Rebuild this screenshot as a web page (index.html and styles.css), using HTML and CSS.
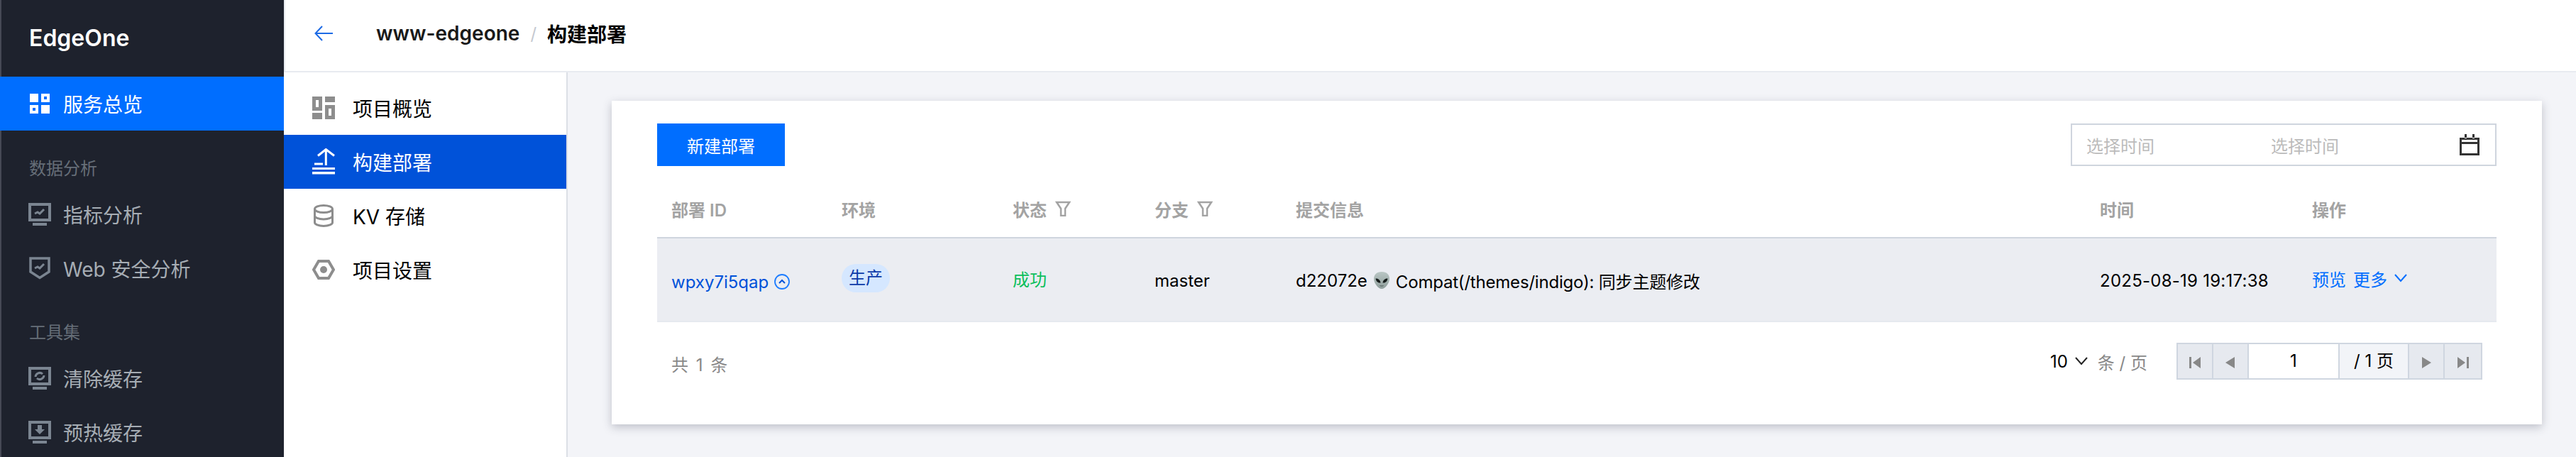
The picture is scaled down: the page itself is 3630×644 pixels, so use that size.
FILE: index.html
```html
<!DOCTYPE html>
<html lang="zh-CN">
<head>
    <meta charset="UTF-8">
    <meta name="viewport" content="width=device-width, initial-scale=1.0">
    <title>构建部署 - EdgeOne</title>
    <link rel="stylesheet" href="styles.css">
</head>
<body>
    <div class="app">
        <aside class="sidebar">
            <div class="brand">EdgeOne</div>
            <a class="side-item side-item-active">
                <svg class="side-icon-grid" viewBox="0 0 28 28"><path fill="#fff" fill-rule="evenodd" d="M0 0h12v12H0zM16 0h12v12H16zM20 4v4h4V4zM0 16h12v12H0zM4 20v4h4v-4zM16 16h12v12H16z"/></svg>
                <span>服务总览</span>
            </a>
            <div class="side-label side-label-first">数据分析</div>
            <a class="side-item">
                <svg class="side-icon" viewBox="0 0 32 32"><path fill="#7b8591" fill-rule="evenodd" d="M0 0h32v26H0zM4 4v18h24V4zM6 28h20v4H6z"/><path fill="none" stroke="#7b8591" stroke-width="3" d="M9 15l4-2 3 2 6-6"/></svg>
                <span>指标分析</span>
            </a>
            <a class="side-item">
                <svg class="side-icon" viewBox="0 0 32 32"><path fill="none" stroke="#7b8591" stroke-width="3.5" d="M3 2h26v19l-13 8.500L3 21z"/><path fill="none" stroke="#7b8591" stroke-width="3" d="M9 16l4-2 3 2 6-6"/></svg>
                <span>Web 安全分析</span>
            </a>
            <div class="side-label">工具集</div>
            <a class="side-item">
                <svg class="side-icon" viewBox="0 0 32 32"><path fill="#7b8591" fill-rule="evenodd" d="M0 0h32v26H0zM4 4v18h24V4zM6 28h20v4H6z"/><path fill="none" stroke="#7b8591" stroke-width="3" d="M10 14a6 6 0 0 1 10-4M22 12a6 6 0 0 1-10 4"/></svg>
                <span>清除缓存</span>
            </a>
            <a class="side-item">
                <svg class="side-icon" viewBox="0 0 32 32"><path fill="#7b8591" fill-rule="evenodd" d="M0 0h32v26H0zM4 4v18h24V4zM6 28h20v4H6z"/><path fill="#7b8591" d="M13 6h6v6h4l-7 7-7-7h4z"/></svg>
                <span>预热缓存</span>
            </a>
        </aside>

        <div class="main">
            <header class="topbar">
                <svg class="back" viewBox="0 0 26 22"><path fill="none" stroke="#1d6be5" stroke-width="2" d="M26 11H2M11 1L1.500 11 11 21"/></svg>
                <span class="crumb">www-edgeone</span>
                <span class="crumb-sep">/</span>
                <span class="crumb crumb-title">构建部署</span>
            </header>

            <div class="body">
                <nav class="subnav">
                    <a class="sub-item">
                        <svg class="sub-icon" viewBox="0 0 32 32"><path fill="#8d8d8d" fill-rule="evenodd" d="M0 0h14v20H0zM5 5v10h4V5zM18 0h14v8H18zM0 23h14v9H0zM18 12h14v20H18zM23 17v10h4V17z"/></svg>
                        <span>项目概览</span>
                    </a>
                    <a class="sub-item sub-item-active">
                        <svg class="sub-icon-up" viewBox="0 0 32 38"><path fill="none" stroke="#fff" stroke-width="3" d="M8 10.500L19.300 1.500 31 10.500M19.300 2v22"/><path fill="#fff" d="M3 20.500h12v3H3zM0 27h32v3H0zM0 33h32v3.500H0z"/></svg>
                        <span>构建部署</span>
                    </a>
                    <a class="sub-item">
                        <svg class="sub-icon" viewBox="0 0 32 32"><g fill="none" stroke="#8d8d8d" stroke-width="3"><path d="M3.500 6.500v19c0 2.500 5 5 12.500 5s12.500-2.500 12.500-5v-19"/><ellipse cx="16" cy="6.500" rx="12.500" ry="5"/><path d="M3.500 16c0 2.500 5 5 12.500 5s12.500-2.500 12.500-5"/></g></svg>
                        <span>KV 存储</span>
                    </a>
                    <a class="sub-item">
                        <svg class="sub-icon" viewBox="0 0 32 32"><path fill="none" stroke="#8d8d8d" stroke-width="4" d="M9 4h14l7 12-7 12H9L2 16z"/><circle cx="16" cy="16" r="5" fill="#8d8d8d"/></svg>
                        <span>项目设置</span>
                    </a>
                </nav>

                <section class="content">
                    <div class="card">
                        <div class="toolbar">
                            <button type="button" class="btn-primary">新建部署</button>
                            <div class="date-range">
                                <span class="date-text">选择时间</span>
                                <span class="date-text">选择时间</span>
                                <svg class="calendar" viewBox="0 0 28 30"><path fill="#333" fill-rule="evenodd" d="M0 5h28v25H0zM3 8v3h22V8zM3 14v13h22V14zM7 0h3v6H7zM18 0h3v6h-3z"/></svg>
                            </div>
                        </div>

                        <div class="row row-head">
                            <div class="cell">部署 ID</div>
                            <div class="cell">环境</div>
                            <div class="cell">状态 <svg class="filter" viewBox="0 0 22 22"><path fill="none" stroke="#a3a3a3" stroke-width="2.500" d="M2 2h18l-6 9v10H8V11z"/></svg></div>
                            <div class="cell">分支 <svg class="filter" viewBox="0 0 22 22"><path fill="none" stroke="#a3a3a3" stroke-width="2.500" d="M2 2h18l-6 9v10H8V11z"/></svg></div>
                            <div class="cell">提交信息</div>
                            <div class="cell">时间</div>
                            <div class="cell">操作</div>
                        </div>
                        <div class="row row-body">
                            <div class="cell cell-id">
                                <a class="link">wpxy7i5qap</a>
                                <svg class="id-icon" viewBox="0 0 22 22"><circle cx="11" cy="11" r="10" fill="none" stroke="#1d7dff" stroke-width="1.800"/><path fill="none" stroke="#0052d9" stroke-width="2" d="M7 13l4-4 4 4"/></svg>
                            </div>
                            <div class="cell"><span class="tag">生产</span></div>
                            <div class="cell status-ok">成功</div>
                            <div class="cell cell-low">master</div>
                            <div class="cell cell-low commit">
                                <span>d22072e</span>
                                <svg class="alien" viewBox="0 0 24 24"><defs><linearGradient id="alien-skin" x1="0" y1="0" x2="0" y2="1"><stop offset="0" stop-color="#b9c6c4"/><stop offset="1" stop-color="#8f9e9c"/></linearGradient></defs><path fill="url(#alien-skin)" d="M12 0C5 0 1 4 1 10c0 6 6 14 11 14s11-8 11-14C23 4 19 0 12 0z"/><path fill="#151b1a" d="M3.500 9.500c3.500-.5 6.500 2 7 6-3.500.5-6.500-2-7-6zM20.500 9.500c-3.500-.5-6.500 2-7 6 3.500.5 6.500-2 7-6z"/><path fill="none" stroke="#4c5755" d="M9.500 19.500c1.500.7 3.500.7 5 0"/></svg>
                                <span class="commit-msg">Compat(/themes/indigo): 同步主题修改</span>
                            </div>
                            <div class="cell cell-low cell-time">2025-08-19 19:17:38</div>
                            <div class="cell cell-ops">
                                <a class="action">预览</a>
                                <a class="action">更多</a>
                                <svg class="caret" viewBox="0 0 18 12"><path fill="none" stroke="#006eff" stroke-width="2" d="M1 1l8 9 8-9"/></svg>
                            </div>
                        </div>

                        <div class="footer">
                            <div class="total">共 1 条</div>
                            <div class="pager">
                                <div class="page-size">
                                    <span>10</span>
                                    <svg class="caret-dark" viewBox="0 0 18 12"><path fill="none" stroke="#222" stroke-width="2" d="M1 1l8 9 8-9"/></svg>
                                    <span class="page-unit">条 / 页</span>
                                </div>
                                <div class="pages">
                                    <div class="page-btn"><svg class="page-icon" viewBox="0 0 16 16"><path fill="#888" d="M0 0h3v16H0zM16 0v16L5 8z"/></svg></div>
                                    <div class="page-btn"><svg class="page-icon" viewBox="0 0 16 16"><path fill="#888" d="M14 0v16L1 8z"/></svg></div>
                                    <div class="page-input">1</div>
                                    <div class="page-count">/ 1 页</div>
                                    <div class="page-btn"><svg class="page-icon" viewBox="0 0 16 16"><path fill="#888" d="M2 0v16l13-8z"/></svg></div>
                                    <div class="page-btn page-btn-last"><svg class="page-icon" viewBox="0 0 16 16"><path fill="#888" d="M0 0v16l11-8zM13 0h3v16h-3z"/></svg></div>
                                </div>
                            </div>
                        </div>
                    </div>
                </section>
            </div>
        </div>
    </div>
</body>
</html>
```

FILE: styles.css
```css
html, body {
    margin: 0;
    height: 100%;
    overflow: hidden;
    font-family: Inter, "Noto Sans CJK SC", sans-serif;
    font-size: 24px;
    color: #000;
}

svg {
    display: block;
    flex: none;
}

.app {
    display: flex;
    width: 3630px;
    height: 644px;
}

/* left dark menu */
.sidebar {
    width: 400px;
    flex: none;
    background-color: #1e222d;
    box-shadow: inset 2px 0 0 #464955;
}

.brand {
    height: 108px;
    padding: 36px 0 0 41px;
    box-sizing: border-box;
    font-size: 32px;
    line-height: 36px;
    font-weight: 600;
    color: #fff;
}

.side-item {
    display: flex;
    align-items: center;
    height: 76px;
    padding-left: 40px;
    color: #a6adb4;
    font-size: 28px;
}

.side-item span {
    margin-left: 17px;
}

.side-item-active {
    background-color: #006eff;
    color: #fff;
    padding-left: 42px;
}

.side-icon {
    width: 32px;
    height: 32px;
}

.side-icon-grid {
    width: 28px;
    height: 28px;
}

.side-item-active span {
    margin-left: 19px;
}

.side-label {
    height: 79px;
    padding: 37px 0 0 41px;
    box-sizing: border-box;
    font-size: 24px;
    line-height: 32px;
    color: #666e78;
}

.side-label-first {
    height: 80px;
    padding-top: 38px;
}

/* main */
.main {
    flex: 1;
    display: flex;
    flex-direction: column;
    min-width: 0;
}

.topbar {
    display: flex;
    align-items: center;
    flex: none;
    height: 102px;
    padding: 0 0 6px 41px;
    box-sizing: border-box;
    background-color: #fff;
    border-left: 2px solid #e8ebf0;
    border-bottom: 2px solid #e8ebf0;
    font-size: 28px;
    font-weight: 600;
    color: #1a1a1a;
}

.back {
    width: 26px;
    height: 22px;
    margin-right: 61px;
}

.crumb-title {
    font-weight: 700;
    color: #000;
}

.crumb-sep {
    margin: 0 15px;
    color: #c4c8d0;
    font-weight: 400;
    font-size: 24px;
}

.body {
    flex: 1;
    display: flex;
    min-height: 0;
    background-color: #f3f4f8;
}

.subnav {
    width: 400px;
    flex: none;
    padding-top: 12px;
    box-sizing: border-box;
    background-color: #fff;
    border-right: 2px solid #dcdfe6;
}

.sub-item {
    display: flex;
    align-items: center;
    height: 76px;
    padding-left: 40px;
    font-size: 28px;
}

.sub-item span {
    margin-left: 25px;
}

.sub-item-active {
    background-color: #0052d9;
    color: #fff;
}

.sub-icon {
    width: 32px;
    height: 32px;
}

.sub-icon-up {
    width: 32px;
    height: 38px;
}

.content {
    flex: 1;
    padding: 40px 48px 0 62px;
    min-width: 0;
}

.card {
    height: 456px;
    padding: 32px 64px 0;
    box-sizing: border-box;
    background-color: #fff;
    box-shadow: 0 4px 12px rgba(54, 58, 80, 0.28);
}

.toolbar {
    display: flex;
    justify-content: space-between;
    height: 60px;
}

.btn-primary {
    width: 180px;
    height: 60px;
    padding: 0;
    border: 0;
    background-color: #006eff;
    color: #fff;
    font-family: inherit;
    font-size: 24px;
}

.date-range {
    display: flex;
    align-items: center;
    width: 600px;
    height: 60px;
    box-sizing: border-box;
    padding-left: 20px;
    border: 2px solid #cfd5de;
}

.date-text {
    width: 260px;
    color: #bbb;
}

.calendar {
    width: 28px;
    height: 30px;
    margin-left: 6px;
}

/* table */
.row {
    display: grid;
    grid-template-columns: 240px 241px 200px 199px 1133px 299px 280px;
}

.row-head {
    height: 102px;
    border-bottom: 2px solid #cfd5de;
    box-sizing: border-box;
    color: #a3a3a3;
    font-weight: 600;
}

.row-body {
    height: 118px;
    background-color: #ebedf2;
    border-bottom: 2px solid #e6e9ef;
    box-sizing: border-box;
}

.cell {
    display: flex;
    align-items: center;
    gap: 8px;
    padding-left: 20px;
    white-space: nowrap;
}

.row-head .cell {
    padding-top: 20px;
}

.row-body .cell {
    padding-bottom: 4px;
}

.row-body .cell-low {
    padding-bottom: 0;
    padding-top: 2px;
}

.row-body .cell-id {
    padding-bottom: 0;
    padding-top: 6px;
}

.cell-time {
    letter-spacing: 0.25px;
}

.filter {
    width: 22px;
    height: 22px;
    margin-left: 4px;
}

.link {
    color: #0052d9;
}

.id-icon {
    width: 22px;
}

.tag {
    display: block;
    padding: 0 10px;
    height: 40px;
    line-height: 40px;
    border-radius: 20px;
    background-color: #d5e7ff;
    color: #0b3aa8;
}

.status-ok {
    color: #0abf5b;
}

.alien {
    width: 24px;
    height: 24px;
}

.commit-msg {
    letter-spacing: -0.2px;
}

.cell-ops {
    gap: 10px;
}

.action {
    color: #006eff;
}

.caret {
    width: 18px;
    height: 12px;
}

.footer {
    display: flex;
    justify-content: space-between;
    padding: 29px 20px 0;
}

.total {
    color: #888;
    padding-top: 16px;
    line-height: 32px;
    word-spacing: 4px;
}

.pager {
    display: flex;
    align-items: center;
    gap: 41px;
}

.page-size {
    display: flex;
    align-items: center;
    gap: 10px;
}

.caret-dark {
    width: 18px;
    height: 12px;
}

.page-unit {
    color: #888;
    margin-left: 4px;
}

.pages {
    display: flex;
    height: 52px;
    box-sizing: border-box;
    border: 2px solid #cfd6e0;
}

.page-btn {
    display: flex;
    align-items: center;
    justify-content: center;
    width: 50px;
    padding-top: 4px;
    box-sizing: border-box;
    background-color: #e6e9ef;
    border-right: 2px solid #cfd6e0;
}

.page-btn-last {
    width: 51px;
    border-right: 0;
}

.page-icon {
    width: 16px;
    height: 16px;
}

.page-input {
    width: 128px;
    box-sizing: border-box;
    border-right: 2px solid #cfd6e0;
    background-color: #fff;
    text-align: center;
    line-height: 48px;
}

.page-count {
    width: 98px;
    box-sizing: border-box;
    border-right: 2px solid #cfd6e0;
    background-color: #f2f4f8;
    text-align: center;
    line-height: 48px;
}
```
